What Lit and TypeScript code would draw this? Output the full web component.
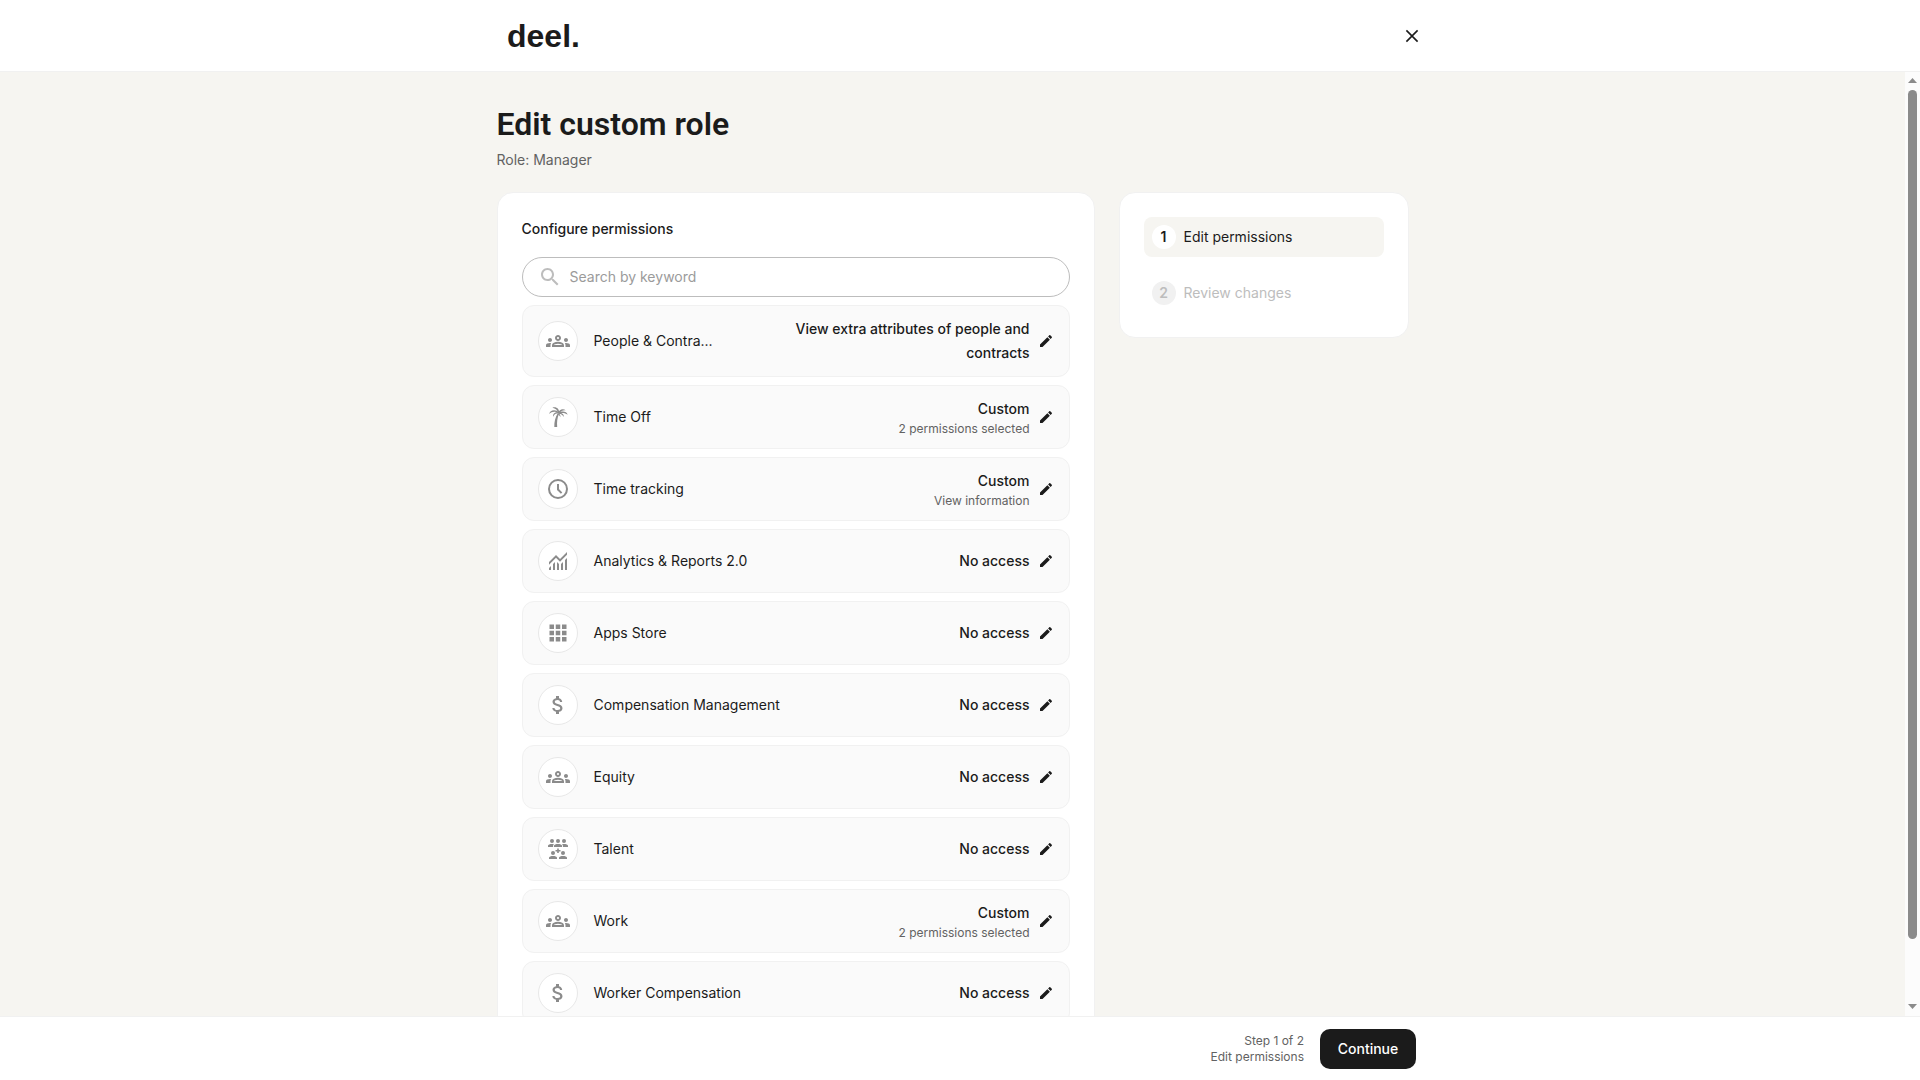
import { LitElement, html, css, svg } from "lit";
import { customElement, property } from "lit/decorators.js";

type IconName = "groups" | "palm" | "clock" | "chart" | "apps" | "dollar" | "talent";

interface Permission {
  icon: IconName;
  label: string;
  value: string;
  detail?: string;
}

const PERMISSIONS: Permission[] = [
  { icon: "groups", label: "People & Contra...", value: "View extra attributes of people and contracts" },
  { icon: "palm", label: "Time Off", value: "Custom", detail: "2 permissions selected" },
  { icon: "clock", label: "Time tracking", value: "Custom", detail: "View information" },
  { icon: "chart", label: "Analytics & Reports 2.0", value: "No access" },
  { icon: "apps", label: "Apps Store", value: "No access" },
  { icon: "dollar", label: "Compensation Management", value: "No access" },
  { icon: "groups", label: "Equity", value: "No access" },
  { icon: "talent", label: "Talent", value: "No access" },
  { icon: "groups", label: "Work", value: "Custom", detail: "2 permissions selected" },
  { icon: "dollar", label: "Worker Compensation", value: "No access" },
];

const ICONS = {
  groups: svg`<path d="M4 13c1.1 0 2-.9 2-2s-.9-2-2-2-2 .9-2 2 .9 2 2 2zm1.13 1.1c-.37-.06-.74-.1-1.13-.1-.99 0-1.93.21-2.78.58C.48 14.9 0 15.62 0 16.43V18h4.5v-1.61c0-.83.23-1.61.63-2.29zM20 13c1.1 0 2-.9 2-2s-.9-2-2-2-2 .9-2 2 .9 2 2 2zm4 3.43c0-.81-.48-1.53-1.22-1.85-.85-.37-1.79-.58-2.78-.58-.39 0-.76.04-1.13.1.4.68.63 1.46.63 2.29V18H24v-1.57zM16.24 13.65c-1.17-.52-2.61-.9-4.24-.9s-3.07.39-4.24.9C6.68 14.13 6 15.21 6 16.39V18h12v-1.61c0-1.18-.68-2.26-1.76-2.74zM8.07 16c.09-.23.13-.39.91-.69.97-.38 1.99-.56 3.02-.56s2.05.18 3.02.56c.77.3.81.46.91.69H8.07zM12 8c.55 0 1 .45 1 1s-.45 1-1 1-1-.45-1-1 .45-1 1-1m0-2c-1.66 0-3 1.34-3 3s1.34 3 3 3 3-1.34 3-3-1.34-3-3-3z"/>`,
  palm: svg`<path d="M8.3 22c-.1-4.8.9-9.7 3.4-13.7l1.3.5c-1.8 4.2-2.2 8.7-1.8 13.2z"/>
    <path d="M12.3 8.3C11.6 5.3 9.7 3.4 6.4 2.8 9.8 1.2 13.3 3.6 13.2 7.6z"/>
    <path d="M12.6 8.4C9.3 5.9 6 6.2 3.2 9 3.6 5 9.5 3.6 13 7.4z"/>
    <path d="M12.5 8.2C9.8 8.2 8 9.3 7.2 11.8 6.3 8.7 9.6 6.5 12.8 7.5z"/>
    <path d="M12.4 7.8C13.2 4.5 16.8 3 20 5.4 17 5 14.8 6 13.4 8.3z"/>
    <path d="M12.6 8C15.7 5.5 20.9 6.3 21.6 9.8 19 7.7 16 7.5 13 8.8z"/>
    <path d="M12.9 7.8C16.3 7.8 18.3 9.5 17.6 12 16.9 10 15.3 9 12.8 8.8z"/>
    <path d="M12.5 8.2C14 9.2 14.7 10.6 14.3 12.2 13.8 10.8 13 9.9 12 9.4z"/>`,
  clock: svg`<circle cx="12" cy="12" r="9" fill="none" stroke="currentColor" stroke-width="2"/><path d="M12 7v5.5l3.6 3.6" fill="none" stroke="currentColor" stroke-width="2"/>`,
  chart: svg`<g transform="translate(0 24) scale(.025)"><path d="M120-120v-80l80-80v160h-80Zm160 0v-240l80-80v320h-80Zm160 0v-320l80 81v239h-80Zm160 0v-239l80-80v319h-80Zm160 0v-400l80-80v480h-80ZM120-327v-113l280-280 160 160 280-280v113L560-447 400-607 120-327Z"/></g>`,
  apps: svg`<path d="M3.5 3.5h4.5v4.5h-4.5zM9.75 3.5h4.5v4.5h-4.5zM16 3.5h4.5v4.5H16zM3.5 9.75h4.5v4.5h-4.5zM9.75 9.75h4.5v4.5h-4.5zM16 9.75h4.5v4.5H16zM3.5 16h4.5v4.5h-4.5zM9.75 16h4.5v4.5h-4.5zM16 16h4.5v4.5H16z"/>`,
  dollar: svg`<path d="M11.8 10.9c-2.27-.59-3-1.2-3-2.15 0-1.09 1.01-1.85 2.7-1.85 1.78 0 2.44.85 2.5 2.1h2.21c-.07-1.72-1.12-3.3-3.21-3.81V3h-3v2.16c-1.94.42-3.5 1.68-3.5 3.61 0 2.31 1.91 3.46 4.7 4.13 2.5.6 3 1.48 3 2.41 0 .69-.49 1.79-2.7 1.79-2.06 0-2.87-.92-2.98-2.1h-2.2c.12 2.19 1.76 3.42 3.68 3.83V21h3v-2.15c1.95-.37 3.5-1.5 3.5-3.55 0-2.84-2.43-3.81-4.7-4.4z"/>`,
  talent: svg`<circle cx="6" cy="4" r="2"/><circle cx="12" cy="4" r="2"/><circle cx="18" cy="4" r="2"/>
    <path d="M2 10V8.8C2 7.6 3.9 7 6 7c.7 0 1.4.1 2 .2-.6.5-.9 1.1-.9 1.8v1zM8 10V8.8C8 7.6 9.9 7 12 7s4 .6 4 1.8V10zM22 10V8.8C22 7.6 20.1 7 18 7c-.7 0-1.4.1-2 .2.6.5.9 1.1.9 1.8v1z"/>
    <path d="M11.2 11.5h1.6v1.5h1.7v1.6h-1.7v1.5h-1.6v-1.5H9.5v-1.6h1.7z"/>
    <circle cx="7" cy="16" r="2"/><circle cx="17" cy="16" r="2"/>
    <path d="M3 22v-1.2C3 19.6 4.9 19 7 19s4 .6 4 1.8V22zM13 22v-1.2c0-1.2 1.9-1.8 4-1.8s4 .6 4 1.8V22z"/>`,
};

@customElement("permission-row")
class PermissionRow extends LitElement {
  @property({ attribute: false }) item!: Permission;

  static styles = css`
    :host {
      display: flex;
      align-items: center;
      gap: 16px;
      padding: 11px 15px;
      border: 1px solid #f1f1f1;
      border-radius: 12px;
      background: #fafafa;
    }
    .badge {
      flex: none;
      display: grid;
      place-items: center;
      box-sizing: border-box;
      width: 40px;
      height: 40px;
      border: 1px solid #e8e8e8;
      border-radius: 50%;
      background: #fff;
      color: #8b8b8b;
    }
    .icon {
      width: 24px;
      height: 24px;
      fill: currentColor;
    }
    .label {
      flex: 1;
      white-space: nowrap;
    }
    .access {
      display: flex;
      align-items: center;
      gap: 8px;
    }
    .values {
      display: flex;
      flex-direction: column;
      max-width: 248px;
      text-align: right;
    }
    .value {
      font-weight: 500;
    }
    .detail {
      font-size: 12px;
      line-height: 16px;
      color: #626262;
    }
    .edit {
      display: flex;
      padding: 0;
      border: 0;
      background: none;
      color: #1b1b1b;
      cursor: pointer;
    }
    .pencil {
      width: 16px;
      height: 16px;
      fill: currentColor;
    }
  `;

  render() {
    const { icon, label, value, detail } = this.item;
    return html`
      <span class="badge"><svg class="icon" viewBox="0 0 24 24" aria-hidden="true">${ICONS[icon]}</svg></span>
      <span class="label" id="label">${label}</span>
      <div class="access">
        <div class="values">
          <span class="value">${value}</span>
          ${detail ? html`<span class="detail">${detail}</span>` : null}
        </div>
        <button class="edit" type="button" aria-labelledby="label">
          <svg class="pencil" viewBox="0 0 24 24" aria-hidden="true">
            <path d="M3 17.25V21h3.75L17.81 9.94l-3.75-3.75L3 17.25zM20.71 7.04c.39-.39.39-1.02 0-1.41l-2.34-2.34c-.39-.39-1.02-.39-1.41 0l-1.83 1.83 3.75 3.75 1.83-1.83z"/>
          </svg>
        </button>
      </div>
    `;
  }
}

@customElement("app-root")
class AppRoot extends LitElement {
  static styles = css`
    :host {
      display: flex;
      flex-direction: column;
      height: 100vh;
      background: #fff;
      color: #1b1b1b;
      font-family: Inter, "Liberation Sans", sans-serif;
      font-size: 14px;
      line-height: 24px;
    }
    .wrap {
      box-sizing: border-box;
      width: 100%;
      max-width: 912px;
      margin: 0 auto;
    }
    .header {
      flex: none;
      border-bottom: 1px solid #f1f1f1;
    }
    .header-bar {
      display: flex;
      align-items: center;
      justify-content: space-between;
      max-width: 928px;
      padding: 16px 0 15px 11px;
    }
    .logo {
      color: #1b1b1b;
      font-family: "Liberation Sans", sans-serif;
      font-size: 32px;
      font-weight: 700;
      line-height: 40px;
      text-decoration: none;
    }
    .close {
      display: flex;
      padding: 0;
      border: 0;
      background: none;
      color: #1b1b1b;
      cursor: pointer;
    }
    .close-icon {
      width: 24px;
      height: 24px;
      fill: none;
      stroke: currentColor;
      stroke-width: 1.6;
    }
    .body {
      flex: 1;
      display: flex;
      min-height: 0;
      background: #f6f5f1;
    }
    .content {
      flex: 1;
      min-width: 0;
      overflow-y: auto;
      scrollbar-width: none;
    }
    .scrollbar {
      flex: none;
      display: flex;
      flex-direction: column;
      align-items: center;
      gap: 7px;
      box-sizing: border-box;
      width: 15px;
      padding: 6px 0 7px;
      background: #fcfcfc;
    }
    .arrow {
      flex: none;
      width: 9px;
      height: 5px;
      fill: #8b8b8b;
    }
    .track {
      flex: 1;
      display: flex;
      width: 9px;
      padding-bottom: 58px;
    }
    .thumb {
      flex: 1;
      border-radius: 5px;
      background: #8b8b8b;
    }
    .page {
      padding: 32px 0;
    }
    .title {
      margin: 0 0 4px;
      font-family: Roboto, "Liberation Sans", sans-serif;
      font-size: 32px;
      font-weight: 600;
      line-height: 40px;
    }
    .subtitle {
      margin: 0 0 20px;
      color: #626262;
    }
    .columns {
      display: flex;
      align-items: flex-start;
      gap: 24px;
    }
    .card {
      box-sizing: border-box;
      padding: 24px;
      border: 1px solid #f1f1f1;
      border-radius: 16px;
      background: #fff;
    }
    .permissions {
      flex: 1;
      display: flex;
      flex-direction: column;
      gap: 8px;
    }
    .heading {
      margin: 0 0 8px;
      font-size: 14px;
      font-weight: 500;
      line-height: 24px;
    }
    .search {
      display: flex;
      align-items: center;
      gap: 8px;
      padding: 7px 15px;
      border: 1px solid #bdbdbd;
      border-radius: 20px;
    }
    .search-icon {
      flex: none;
      width: 24px;
      height: 24px;
      fill: #bdbdbd;
    }
    .search-input {
      flex: 1;
      min-width: 0;
      height: 24px;
      padding: 0;
      border: 0;
      outline: 0;
      background: none;
      color: inherit;
      font: inherit;
    }
    .search-input::placeholder {
      color: #9b9b9b;
      opacity: 1;
    }
    .steps {
      flex: 0 0 290px;
      display: flex;
      flex-direction: column;
      gap: 16px;
      margin: 0;
      list-style: none;
    }
    .step {
      display: flex;
      align-items: center;
      gap: 8px;
      padding: 8px;
      border-radius: 8px;
      color: #bdbdbd;
    }
    .step.active {
      background: #f6f5f1;
      color: #1b1b1b;
    }
    .number {
      width: 24px;
      border-radius: 50%;
      background: #f1f1f1;
      font-weight: 600;
      text-align: center;
    }
    .active .number {
      background: #fff;
    }
    .footer {
      flex: none;
      border-top: 1px solid #f1f1f1;
    }
    .footer-bar {
      display: flex;
      align-items: center;
      justify-content: flex-end;
      gap: 16px;
      padding: 12px 0 11px;
    }
    .progress {
      display: flex;
      flex-direction: column;
      color: #626262;
      font-size: 12px;
      line-height: 16px;
      text-align: right;
    }
    .continue {
      min-width: 96px;
      height: 40px;
      padding: 0 16px;
      border: 0;
      border-radius: 10px;
      background: #1b1b1b;
      color: #fff;
      font: inherit;
      font-weight: 500;
      cursor: pointer;
    }
  `;

  render() {
    return html`
      <header class="header">
        <div class="wrap header-bar">
          <a class="logo" href="#">deel.</a>
          <button class="close" type="button" aria-label="Close">
            <svg class="close-icon" viewBox="0 0 24 24" aria-hidden="true"><path d="M6.4 6.4l11.2 11.2M17.6 6.4L6.4 17.6"/></svg>
          </button>
        </div>
      </header>
      <div class="body">
        <main class="content">
          <div class="wrap page">
            <h1 class="title">Edit custom role</h1>
            <p class="subtitle">Role: Manager</p>
            <div class="columns">
              <section class="card permissions">
                <h2 class="heading">Configure permissions</h2>
                <label class="search">
                  <svg class="search-icon" viewBox="0 0 24 24" aria-hidden="true">
                    <path d="M15.5 14h-.79l-.28-.27C15.41 12.59 16 11.11 16 9.5 16 5.91 13.09 3 9.5 3S3 5.91 3 9.5 5.91 16 9.5 16c1.61 0 3.09-.59 4.23-1.57l.27.28v.79l5 4.99L20.49 19l-4.99-5zm-6 0C7.01 14 5 11.99 5 9.5S7.01 5 9.5 5 14 7.01 14 9.5 11.99 14 9.5 14z"/>
                  </svg>
                  <input class="search-input" type="text" placeholder="Search by keyword" aria-label="Search by keyword" />
                </label>
                ${PERMISSIONS.map((item) => html`<permission-row .item=${item}></permission-row>`)}
              </section>
              <ol class="card steps">
                <li class="step active"><span class="number">1</span>Edit permissions</li>
                <li class="step"><span class="number">2</span>Review changes</li>
              </ol>
            </div>
          </div>
        </main>
        <div class="scrollbar" aria-hidden="true">
          <svg class="arrow" viewBox="0 0 9 5"><path d="M4.5 0L9 5H0z"/></svg>
          <div class="track"><div class="thumb"></div></div>
          <svg class="arrow" viewBox="0 0 9 5"><path d="M0 0h9L4.5 5z"/></svg>
        </div>
      </div>
      <footer class="footer">
        <div class="wrap footer-bar">
          <div class="progress"><span>Step 1 of 2</span><span>Edit permissions</span></div>
          <button class="continue" type="button">Continue</button>
        </div>
      </footer>
    `;
  }
}
